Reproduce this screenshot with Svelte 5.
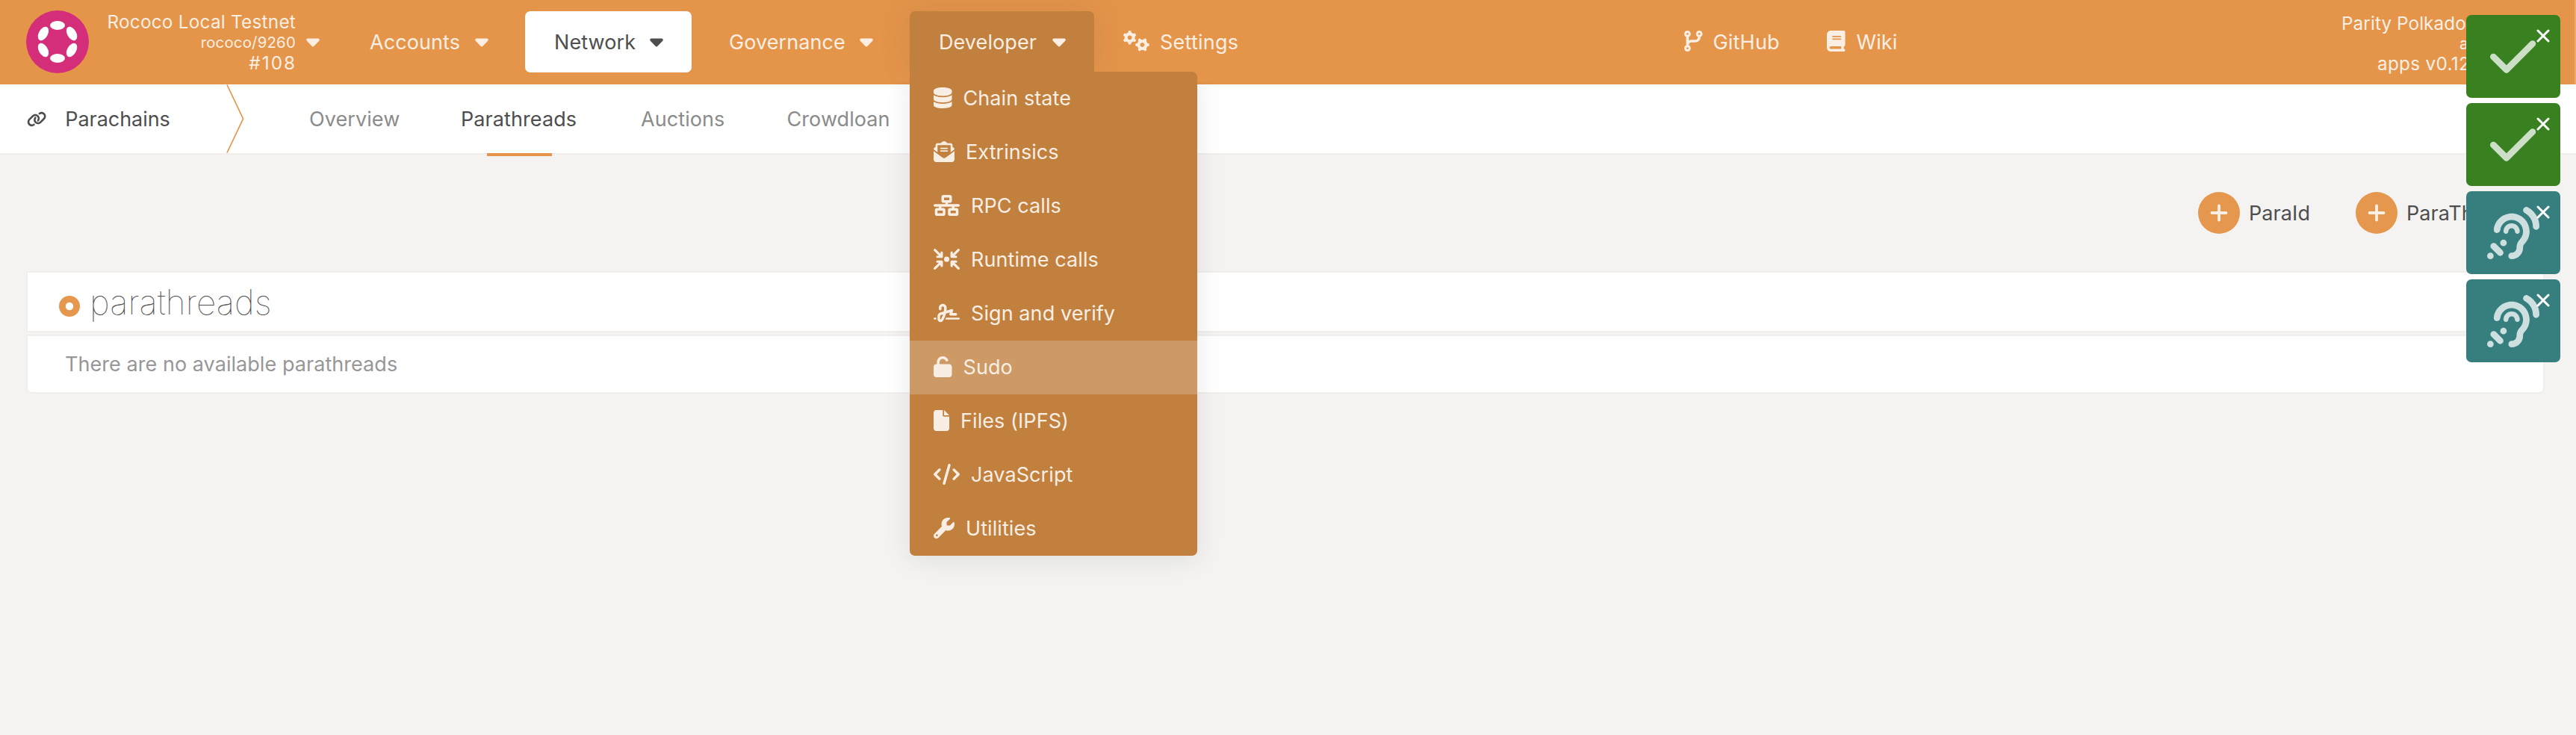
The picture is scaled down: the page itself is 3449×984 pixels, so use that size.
<script>
  const icons = {
    database: [448, 'M448 80v48c0 44.2-100.3 80-224 80S0 172.2 0 128V80C0 35.8 100.3 0 224 0S448 35.8 448 80zM393.2 214.7c20.8-7.4 39.9-16.9 54.8-28.6V288c0 44.2-100.3 80-224 80S0 332.2 0 288V186.1c14.9 11.8 34 21.2 54.8 28.6C99.7 230.7 159.5 240 224 240s124.3-9.3 169.2-25.3zM0 346.1c14.9 11.8 34 21.2 54.8 28.6C99.7 390.7 159.5 400 224 400s124.3-9.3 169.2-25.3c20.8-7.4 39.9-16.9 54.8-28.6V432c0 44.2-100.3 80-224 80S0 476.2 0 432V346.1z'],
    envelope: [512, 'M215.4 96H144 107.8 96v8.8V144v40.4 89L.2 202.5c1.6-18.1 10.9-34.9 25.7-45.8L48 140.3V96c0-26.5 21.5-48 48-48h76.6l49.9-36.9C232.2 3.9 243.9 0 256 0s23.8 3.9 33.5 11L339.4 48H416c26.5 0 48 21.5 48 48v44.3l22.1 16.4c14.8 10.9 24.1 27.7 25.7 45.8L416 273.4v-89V144 104.8 96H404.2 368 296.6 215.4zM0 448V242.1L217.6 403.3c11.1 8.2 24.6 12.7 38.4 12.7s27.3-4.4 38.4-12.7L512 242.1V448c0 35.3-28.7 64-64 64H64c-35.3 0-64-28.7-64-64zM176 160H336c8.8 0 16 7.2 16 16s-7.2 16-16 16H176c-8.8 0-16-7.2-16-16s7.2-16 16-16zm0 64H336c8.8 0 16 7.2 16 16s-7.2 16-16 16H176c-8.8 0-16-7.2-16-16s7.2-16 16-16z'],
    network: [640, 'M256 64H384v64H256V64zM240 0c-26.5 0-48 21.5-48 48v96c0 26.5 21.5 48 48 48h48v32H32c-17.7 0-32 14.3-32 32s14.3 32 32 32h96v32H80c-26.5 0-48 21.5-48 48v96c0 26.5 21.5 48 48 48H240c26.5 0 48-21.5 48-48V368c0-26.5-21.5-48-48-48H192V288H448v32H400c-26.5 0-48 21.5-48 48v96c0 26.5 21.5 48 48 48H560c26.5 0 48-21.5 48-48V368c0-26.5-21.5-48-48-48H512V288h96c17.7 0 32-14.3 32-32s-14.3-32-32-32H352V192h48c26.5 0 48-21.5 48-48V48c0-26.5-21.5-48-48-48H240zM96 448V384H224v64H96zm320-64H544v64H416V384z'],
    signature: [640, 'M192 128c0-17.7 14.3-32 32-32s32 14.3 32 32v7.8c0 27.7-2.4 55.3-7.1 82.5l-84.4 25.3c-40.6 12.2-68.4 49.6-68.4 92v71.9c0 40 32.5 72.5 72.5 72.5c26 0 50-13.9 62.9-36.5l13.9-24.3c26.8-47 46.5-97.7 58.4-150.5l94.4-28.3-12.5 37.5c-3.3 9.8-1.6 20.5 4.4 28.8s15.7 13.3 26 13.3H544c17.7 0 32-14.3 32-32s-14.3-32-32-32H460.4l18-53.9c3.8-11.3 .9-23.8-7.4-32.4s-20.7-11.8-32.2-8.4L316.4 198.1c2.4-20.7 3.6-41.4 3.6-62.3V128c0-53-43-96-96-96s-96 43-96 96v32c0 17.7 14.3 32 32 32s32-14.3 32-32V128zm-9.2 177l49-14.7c-10.4 33.8-24.5 66.4-42.1 97.2l-13.9 24.3c-1.5 2.6-4.3 4.3-7.4 4.3c-4.7 0-8.5-3.8-8.5-8.5V335.6c0-14.1 9.3-26.6 22.8-30.7zM24 368c-13.3 0-24 10.7-24 24s10.7 24 24 24H64.3c-.2-2.8-.3-5.6-.3-8.5V368H24zm592 48c13.3 0 24-10.7 24-24s-10.7-24-24-24H305.9c-6.7 16.3-14.2 32.3-22.3 48H616z'],
    unlock: [448, 'M144 144c0-44.2 35.8-80 80-80c31.9 0 59.4 18.6 72.3 45.7c7.6 16 26.7 22.8 42.6 15.2s22.8-26.7 15.2-42.6C331 33.7 281.5 0 224 0C144.5 0 80 64.5 80 144v48H64c-35.3 0-64 28.7-64 64V448c0 35.3 28.7 64 64 64H384c35.3 0 64-28.7 64-64V256c0-35.3-28.7-64-64-64H144V144z'],
    file: [384, 'M0 64C0 28.7 28.7 0 64 0H224V128c0 17.7 14.3 32 32 32H384V448c0 35.3-28.7 64-64 64H64c-35.3 0-64-28.7-64-64V64zm384 64H256V0L384 128z'],
    code: [640, 'M392.8 1.2c-17-4.9-34.7 5-39.6 22l-128 448c-4.9 17 5 34.7 22 39.6s34.7-5 39.6-22l128-448c4.9-17-5-34.7-22-39.6zm80.6 120.1c-12.5 12.5-12.5 32.8 0 45.3L562.7 256l-89.4 89.4c-12.5 12.5-12.5 32.8 0 45.3s32.8 12.5 45.3 0l112-112c12.5-12.5 12.5-32.8 0-45.3l-112-112c-12.5-12.5-32.8-12.5-45.3 0zm-306.7 0c-12.5-12.5-32.8-12.5-45.3 0l-112 112c-12.5 12.5-12.5 32.8 0 45.3l112 112c12.5 12.5 32.8 12.5 45.3 0s12.5-32.8 0-45.3L77.3 256l89.4-89.4c12.5-12.5 12.5-32.8 0-45.3z'],
    wrench: [512, 'M352 320c88.4 0 160-71.6 160-160c0-15.3-2.2-30.1-6.2-44.2c-3.1-10.8-16.4-13.2-24.3-5.3l-76.8 76.8c-3 3-7.1 4.7-11.3 4.7H336c-8.8 0-16-7.2-16-16V118.6c0-4.2 1.7-8.3 4.7-11.3l76.8-76.8c7.9-7.9 5.4-21.2-5.3-24.3C382.1 2.2 367.3 0 352 0C263.6 0 192 71.6 192 160c0 19.1 3.4 37.5 9.5 54.5L19.9 396.1C7.2 408.8 0 426.1 0 444.1C0 481.6 30.4 512 67.9 512c18 0 35.3-7.2 48-19.9L297.5 310.5c17 6.2 35.4 9.5 54.5 9.5zM80 408a24 24 0 1 1 0 48 24 24 0 1 1 0-48z'],
    branch: [448, 'M80 104a24 24 0 1 0 0-48 24 24 0 1 0 0 48zm80-24c0 32.8-19.7 61-48 73.3v87.8c18.8-10.9 40.7-17.1 64-17.1h96c35.3 0 64-28.7 64-64v-6.7C307.7 141 288 112.8 288 80c0-44.2 35.8-80 80-80s80 35.8 80 80c0 32.8-19.7 61-48 73.3V160c0 70.7-57.3 128-128 128H176c-35.3 0-64 28.7-64 64v6.7c28.3 12.3 48 40.5 48 73.3c0 44.2-35.8 80-80 80s-80-35.8-80-80c0-32.8 19.7-61 48-73.3V352 153.3C19.7 141 0 112.8 0 80C0 35.8 35.8 0 80 0s80 35.8 80 80zm232 0a24 24 0 1 0 -48 0 24 24 0 1 0 48 0zM80 456a24 24 0 1 0 0-48 24 24 0 1 0 0 48z'],
    book: [448, 'M96 0C43 0 0 43 0 96V416c0 53 43 96 96 96H384h32c17.7 0 32-14.3 32-32s-14.3-32-32-32V384c17.7 0 32-14.3 32-32V32c0-17.7-14.3-32-32-32H384 96zm0 384H352v64H96c-17.7 0-32-14.3-32-32s14.3-32 32-32zm32-240c0-8.8 7.2-16 16-16H336c8.8 0 16 7.2 16 16s-7.2 16-16 16H144c-8.8 0-16-7.2-16-16zm16 48H336c8.8 0 16 7.2 16 16s-7.2 16-16 16H144c-8.8 0-16-7.2-16-16s7.2-16 16-16z'],
    link: [640, 'M579.8 267.7c56.5-56.5 56.5-148 0-204.5c-50-50-128.8-56.5-186.3-15.4l-1.6 1.1c-14.4 10.3-17.7 30.3-7.4 44.6s30.3 17.7 44.6 7.4l1.6-1.1c32.1-22.9 76-19.3 103.8 8.6c31.5 31.5 31.5 82.5 0 114L422.3 334.8c-31.5 31.5-82.5 31.5-114 0c-27.9-27.9-31.5-71.8-8.6-103.8l1.1-1.6c10.3-14.4 6.9-34.4-7.4-44.6s-34.4-6.9-44.6 7.4l-1.1 1.6C206.5 251.2 213 330 263 380c56.5 56.5 148 56.5 204.5 0L579.8 267.7zM60.2 244.3c-56.5 56.5-56.5 148 0 204.5c50 50 128.8 56.5 186.3 15.4l1.6-1.1c14.4-10.3 17.7-30.3 7.4-44.6s-30.3-17.7-44.6-7.4l-1.6 1.1c-32.1 22.9-76 19.3-103.8-8.6C74 372 74 321 105.5 289.5L217.7 177.2c31.5-31.5 82.5-31.5 114 0c27.9 27.9 31.5 71.8 8.6 103.9l-1.1 1.6c-10.3 14.4-6.9 34.4 7.4 44.6s34.4 6.9 44.6-7.4l1.1-1.6C433.5 260.8 427 182 377 132c-56.5-56.5-148-56.5-204.5 0L60.2 244.3z'],
    check: [448, 'M438.6 105.4c12.5 12.5 12.5 32.8 0 45.3l-256 256c-12.5 12.5-32.8 12.5-45.3 0l-128-128c-12.5-12.5-12.5-32.8 0-45.3s32.8-12.5 45.3 0L160 338.7 393.4 105.4c12.5-12.5 32.8-12.5 45.3 0z'],
    ear: [512, 'M398.3 3.4c-15.8-7.9-35-1.5-42.9 14.3c-7.9 15.8-1.5 34.9 14.2 42.9l.4 .2c.4 .2 1.1 .6 2.1 1.2c2 1.2 5 3 8.7 5.6c7.5 5.2 17.6 13.2 27.7 24.2C428.5 113.4 448 146 448 192c0 17.7 14.3 32 32 32s32-14.3 32-32c0-66-28.5-113.4-56.5-143.7C441.6 33.2 427.7 22.2 417.3 15c-5.3-3.7-9.7-6.4-13-8.3c-1.6-1-3-1.7-4-2.2c-.5-.3-.9-.5-1.2-.7l-.4-.2-.2-.1L384 32l14.3-28.6zM128.7 227.5c6.2-56 53.7-99.5 111.3-99.5c61.9 0 112 50.1 112 112c0 29.3-11.2 55.9-29.6 75.9c-17 18.4-34.4 45.1-34.4 78V400c0 26.5-21.5 48-48 48c-17.7 0-32 14.3-32 32s14.3 32 32 32c61.9 0 112-50.1 112-112v-6.1c0-9.8 5.4-21.7 17.4-34.7C398.3 327.9 416 286 416 240c0-97.2-78.8-176-176-176C149.4 64 74.8 132.5 65.1 220.5c-1.9 17.6 10.7 33.4 28.3 35.3s33.4-10.7 35.3-28.3zM32 512a32 32 0 1 0 0-64 32 32 0 1 0 0 64zM192 352a32 32 0 1 0 -64 0 32 32 0 1 0 64 0zM41.4 361.4c-12.5 12.5-12.5 32.8 0 45.3l64 64c12.5 12.5 32.8 12.5 45.3 0s12.5-32.8 0-45.3l-64-64c-12.5-12.5-32.8-12.5-45.3 0zM208 240c0-17.7 14.3-32 32-32s32 14.3 32 32c0 13.3 10.7 24 24 24s24-10.7 24-24c0-44.2-35.8-80-80-80s-80 35.8-80 80c0 13.3 10.7 24 24 24s24-10.7 24-24z']
  };

  const menu = [
    ['database', 'Chain state'],
    ['envelope', 'Extrinsics'],
    ['network', 'RPC calls'],
    ['converge', 'Runtime calls'],
    ['signature', 'Sign and verify'],
    ['unlock', 'Sudo'],
    ['file', 'Files (IPFS)'],
    ['code', 'JavaScript'],
    ['wrench', 'Utilities']
  ];
  const tabs = [
    ['Overview', 203],
    ['Parathreads', 241],
    ['Auctions', 195.5],
    ['Crowdloan', 200]
  ];
  const toasts = ['check', 'check', 'ear', 'ear'];
  const turns = [0, 60, 120, 180, 240, 300];
</script>

{#snippet icon(name, h)}
  {#if name === 'converge'}
    <svg class="icon" viewBox="0 0 640 512" width={h * 1.25} height={h}>
      <circle cx="320" cy="256" r="66" />
      <g fill="none" stroke="currentColor" stroke-width="58" stroke-linecap="round" stroke-linejoin="round">
        <path d="M30 30 190 190M198 92V197H92" />
        <path d="M610 30 450 190M442 92V197H548" />
        <path d="M30 482 190 322M198 420V315H92" />
        <path d="M610 482 450 322M442 420V315H548" />
      </g>
    </svg>
  {:else if name === 'gears'}
    <svg class="icon" viewBox="0 0 640 512" width={h * 1.25} height={h}>
      {#each [[157, 170, 0], [466, 346, 30]] as [x, y, r]}
        <g transform="translate({x} {y}) rotate({r})" stroke="currentColor">
          <circle r="90" fill="none" stroke-width="76" />
          {#each turns as a}
            <path d="M-24 -108 -15 -150H15L24 -108Z" stroke-width="36" stroke-linejoin="round" transform="rotate({a})" />
          {/each}
        </g>
      {/each}
    </svg>
  {:else}
    <svg class="icon" viewBox="0 0 {icons[name][0]} 512" width={(h * icons[name][0]) / 512} height={h}>
      <path d={icons[name][1]} />
    </svg>
  {/if}
{/snippet}

{#snippet caret()}
  <svg class="caret" viewBox="0 0 18 12" width="18" height="12"><path d="M2.2 .5H15.8C17.6 .5 18.4 2.4 17.2 3.7L10.4 10.8C9.6 11.6 8.4 11.6 7.6 10.8L.8 3.7C-.4 2.4 .4 .5 2.2 .5Z" /></svg>
{/snippet}

<div class="page">
  <header>
    <div class="brand">
      <svg class="logo" viewBox="-42 -42 84 84" width="84" height="84">
        <circle r="42" fill="#d42e7b" />
        {#each turns as a}
          <ellipse cy="-22" rx="10" ry="6" fill="#fff" transform="rotate({a})" />
        {/each}
      </svg>
      <div class="chain">
        <div>Rococo Local Testnet</div>
        <div class="small">rococo/9260</div>
        <div class="block">#108</div>
      </div>
      {@render caret()}
    </div>
    <nav class="groups">
      <div class="item accounts"><span>Accounts</span>{@render caret()}</div>
      <div class="item network"><span>Network</span>{@render caret()}</div>
      <div class="item governance"><span>Governance</span>{@render caret()}</div>
      <div class="item developer">
        <span>Developer</span>{@render caret()}
        <div class="shade"></div>
        <ul class="menu">
          {#each menu as [ic, label]}
            <li class:hovered={label === 'Sudo'}>{@render icon(ic, 28)}<span>{label}</span></li>
          {/each}
        </ul>
      </div>
      <div class="item plain">{@render icon('gears', 28)}<span>Settings</span></div>
    </nav>
    <nav class="external">
      <div class="item github">{@render icon('branch', 28)}<span>GitHub</span></div>
      <div class="item wiki">{@render icon('book', 28)}<span>Wiki</span></div>
    </nav>
    <div class="version">
      <div>Parity Polkado</div>
      <div class="api">a</div>
      <div class="apps">apps v0.12</div>
    </div>
  </header>

  <div class="tabs">
    <div class="section">{@render icon('link', 21)}<span>Parachains</span></div>
    <svg class="divider" viewBox="0 0 24 92" width="24" height="92"><path d="M1 .5 22.5 46 1 91.5" fill="none" stroke="#e5954a" stroke-width="1.7" /></svg>
    {#each tabs as [label, w]}
      <div class="tab" class:active={label === 'Parathreads'} style:width="{w}px"><span>{label}</span></div>
    {/each}
  </div>

  <main>
    <div class="actions">
      {#each ['ParaId', 'ParaTh'] as label}
        <div class="action">
          <svg viewBox="0 0 56 56" width="56" height="56"><circle cx="28" cy="28" r="28" fill="#e5984d" /><path d="M28 18.5V37.5M18.5 28H37.5" stroke="#fcefe3" stroke-width="3.8" stroke-linecap="round" /></svg>
          <span>{label}</span>
        </div>
      {/each}
    </div>
    <div class="panel title">
      <svg viewBox="0 0 28 28" width="28" height="28"><circle cx="14" cy="14" r="9.6" fill="none" stroke="#e5984d" stroke-width="8.8" /></svg>
      <h1>parathreads</h1>
    </div>
    <div class="panel empty">There are no available parathreads</div>
  </main>

  <aside class="toasts">
    {#each toasts as t}
      <div class="toast {t}">
        {@render icon(t, 70)}
        <svg class="close" viewBox="0 0 18 18" width="18" height="18"><path d="M2 2 16 16M16 2 2 16" stroke="#fff" stroke-width="3" stroke-linecap="round" /></svg>
      </div>
    {/each}
  </aside>
</div>

<style>
  :global(body) { margin: 0; background: #f4f3f1; }
  .page {
    width: 3449px; height: 984px; overflow: hidden; position: relative;
    background: #f4f3f1; color: #4e4e4e; white-space: nowrap;
    font-family: Inter, 'Open Sans', sans-serif; font-size: 27px; line-height: 36px; letter-spacing: 0.08px;
  }
  .icon, .caret { fill: currentColor; display: block; flex: none; }
  header {
    display: flex; box-sizing: border-box; height: 113px; padding-top: 14px;
    background: #e5954a; color: #fbeee2; border-right: 2px solid #eaab6d;
  }
  .brand { display: flex; width: 421px; padding-left: 35px; }
  .chain { width: 277px; padding-top: 1px; text-align: right; font-size: 24.3px; line-height: 28px; letter-spacing: 0.25px; }
  .chain .small { font-size: 20.3px; line-height: 27px; }
  .chain .block { letter-spacing: 2px; margin-right: -1px; }
  .brand .caret { margin: 37px 0 0 14px; }
  .groups { display: flex; gap: 11px; width: 1740px; }
  .item { display: flex; align-items: center; box-sizing: border-box; height: 82px; margin-top: 1px; }
  .item > span { margin-top: 2px; }
  .item .icon { margin-top: -2px; }
  .groups .item { padding: 0 38px 0 39px; justify-content: space-between; border-radius: 7px; }
  .item .caret { margin-top: 2px; }
  .groups .accounts { width: 236px; }
  .network { width: 223px; background: #fff; color: #4e4e4e; }
  .governance { width: 270px; }
  .developer { position: relative; width: 247px; background: #c1803e; box-shadow: 0 0 45px rgba(34, 36, 38, 0.1); }
  .groups .developer { border-radius: 7px 7px 0 0; }
  .groups .plain { padding: 0 0 0 28px; justify-content: flex-start; gap: 14px; position: relative; letter-spacing: 0.25px; }
  .external { display: flex; padding-left: 59px; width: 880px; }
  .github { width: 191px; gap: 14px; letter-spacing: 0.2px; }
  .wiki { gap: 15px; }
  .version { padding-top: 3px; font-size: 24.3px; line-height: 28px; }
  .version .api { margin-left: 158px; font-size: 21px; line-height: 27px; }
  .version .apps { margin-left: 48px; line-height: 27px; letter-spacing: 0.3px; }
  .menu {
    position: absolute; z-index: 5; left: 0; top: 81px; width: 385px; margin: 0; padding: 0; list-style: none;
    background: #c1803e; border-radius: 0 7px 7px 7px; overflow: hidden; color: #f8eee4;
  }
  .shade { position: absolute; left: 0; top: 81px; width: 385px; height: 648px; border-radius: 7px; box-shadow: 0 4px 35px rgba(34, 36, 38, 0.1); clip-path: inset(14px -60px -60px -60px); }
  .menu li { display: flex; align-items: center; gap: 15px; box-sizing: border-box; height: 72px; padding-left: 32px; }
  .menu li .icon { margin-top: -2px; }
  .menu .hovered { background: #cd9a65; }
  .tabs { display: flex; height: 92px; background: #fff; border-bottom: 2px solid #f1eeec; color: #8b8b8b; }
  .tabs span { margin-top: 2px; }
  .section { display: flex; align-items: center; gap: 25px; box-sizing: border-box; width: 303px; padding-left: 36px; color: #4e4e4e; letter-spacing: -0.05px; }
  .divider { flex: none; margin-right: 87px; }
  .tab { display: flex; align-items: center; flex: none; position: relative; }
  .tab.active { color: #4e4e4e; }
  .tab.active::after { content: ''; position: absolute; left: 35px; top: 92px; width: 87px; height: 4px; background: #e5954a; }
  main { padding: 50px 42px 0 35px; }
  .actions { display: flex; justify-content: flex-end; height: 106px; padding-right: 42px; }
  .action { display: flex; gap: 12px; width: 211px; line-height: 57px; }
  .panel { display: flex; align-items: center; box-sizing: border-box; background: #fff; border: 2px solid #f1eeec; }
  .title { height: 82px; padding-left: 42px; gap: 13px; }
  .title svg { margin-top: 12px; }
  h1 { margin: 0; font-size: 46px; font-weight: 100; line-height: 60px; letter-spacing: 0.05px; }
  .empty { height: 79px; margin-top: 3px; padding: 1px 0 0 50px; color: #979797; border-radius: 0 0 7px 7px; letter-spacing: 0.05px; }
  .toasts { position: absolute; z-index: 10; right: 21px; top: 20px; display: grid; gap: 7px; }
  .toast { display: grid; place-items: center; position: relative; width: 126px; height: 111px; border-radius: 7px; color: #cddfdf; background: #377f7f; }
  .toast.check { background: #388020; color: #cddfc7; }
  .close { position: absolute; right: 14px; top: 19px; }
</style>
